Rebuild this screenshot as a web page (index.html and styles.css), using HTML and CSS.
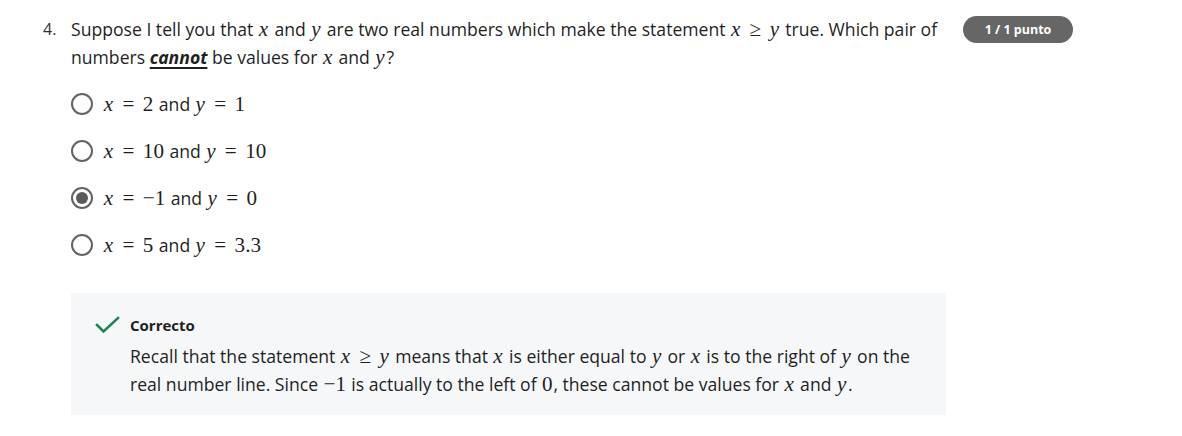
FILE: index.html
```html
<!DOCTYPE html>
<html>
<head>
<meta charset="utf-8">
<link rel="stylesheet" href="styles.css">
</head>
<body>
<div class="question">
  <div class="num">4.</div>
  <div class="main">
    <div class="prompt">Suppose I tell you that <span class="m"><i>x</i></span> and <span class="m"><i>y</i></span> are two real numbers which make the statement <span class="m"><i>x</i> ≥ <i>y</i></span> true. Which pair of numbers <u class="em">cannot</u> be values for <span class="m"><i>x</i></span> and <span class="m"><i>y</i></span>?</div>
    <div class="options">
      <div class="opt"><span class="radio"></span><span class="lbl"><span class="m"><i>x</i> = 2</span> and <span class="m"><i>y</i> = 1</span></span></div>
      <div class="opt"><span class="radio"></span><span class="lbl"><span class="m"><i>x</i> = 10</span> and <span class="m"><i>y</i> = 10</span></span></div>
      <div class="opt"><span class="radio checked"></span><span class="lbl"><span class="m"><i>x</i> = −1</span> and <span class="m"><i>y</i> = 0</span></span></div>
      <div class="opt"><span class="radio"></span><span class="lbl"><span class="m"><i>x</i> = 5</span> and <span class="m"><i>y</i> = 3.3</span></span></div>
    </div>
    <div class="feedback">
      <svg class="check" width="26" height="20" viewBox="0 0 26 20"><polyline points="3,10 9.5,16.5 24,3" fill="none" stroke="#1f8354" stroke-width="2.6" stroke-linecap="square"/></svg>
      <div class="fb-body">
        <div class="fb-title">Correcto</div>
        <div class="fb-text">Recall that the statement <span class="m"><i>x</i> ≥ <i>y</i></span> means that <span class="m"><i>x</i></span> is either equal to <span class="m"><i>y</i></span> or <span class="m"><i>x</i></span> is to the right of <span class="m"><i>y</i></span> on the real number line. Since <span class="m">−1</span> is actually to the left of <span class="m">0</span>, these cannot be values for <span class="m"><i>x</i></span> and <span class="m"><i>y</i></span>.</div>
      </div>
    </div>
  </div>
  <div class="badge">1 / 1 punto</div>
</div>
</body>
</html>
```

FILE: styles.css
```css
html, body {
  margin: 0;
  padding: 0;
  background: #ffffff;
}
body {
  font-family: "Open Sans", "Liberation Sans", sans-serif;
  color: #1f1f1f;
}
.question {
  display: flex;
  align-items: flex-start;
  padding: 15px 0 0 43px;
}
.num {
  width: 28px;
  flex: none;
  font-size: 16px;
  line-height: 28px;
  color: #333;
}
.main {
  width: 875px;
  flex: none;
}
.prompt {
  font-size: 17.6px;
  line-height: 28px;
  width: 880px;
}
.m {
  font-family: "Liberation Serif", "DejaVu Serif", serif;
  font-size: 1.2em;
  white-space: nowrap;
  word-spacing: 0.15em;
  margin: 0 0.04em;
}
.m i {
  font-style: italic;
  padding-right: 0.04em;
}
.em {
  font-weight: 700;
  font-style: italic;
  text-decoration-thickness: 2px;
  text-underline-offset: 3px;
}
.options {
  display: flex;
  flex-direction: column;
  gap: 19px;
  padding: 19px 0 0 0;
}
.opt {
  display: flex;
  align-items: center;
  gap: 10px;
  height: 28px;
  font-size: 17.6px;
}
.radio {
  width: 22px;
  height: 22px;
  box-sizing: border-box;
  border: 2px solid #636363;
  border-radius: 50%;
  flex: none;
  display: flex;
  align-items: center;
  justify-content: center;
}
.radio.checked::after {
  content: "";
  width: 12px;
  height: 12px;
  border-radius: 50%;
  background: #5b5b5b;
}
.feedback {
  margin-top: 34px;
  background: #f5f7f8;
  display: flex;
  gap: 10px;
  padding: 21px 24px 17px 23px;
}
.check {
  flex: none;
  margin-top: 1px;
}
.fb-title {
  font-size: 15px;
  font-weight: 700;
  line-height: 22px;
  margin-bottom: 6px;
}
.fb-text {
  font-size: 17.6px;
  line-height: 28px;
}
.badge {
  margin-left: 17px;
  margin-top: 1px;
  width: 110px;
  height: 27px;
  border-radius: 14px;
  background: #666666;
  color: #fff;
  font-size: 12.5px;
  font-weight: 700;
  display: flex;
  align-items: center;
  justify-content: center;
}
```
